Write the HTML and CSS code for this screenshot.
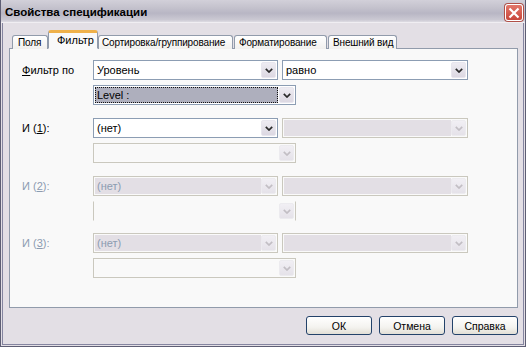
FILE: index.html
```html
<!DOCTYPE html>
<html>
<head>
<meta charset="utf-8">
<link rel="stylesheet" href="styles.css">
</head>
<body>
<div class="win">
  <div class="titlebar">
    <span class="title">Свойства спецификации</span>
    <span class="close"><svg width="12" height="12" viewBox="0 0 12 12"><path d="M1.5 1.5 L10.5 10.5 M10.5 1.5 L1.5 10.5" stroke="#fff" stroke-width="2.2" fill="none"/></svg></span>
  </div>
  <div class="body">
    <div class="tabs">
      <div class="tab t1">Поля</div>
      <div class="tab t2 active">Фильтр</div>
      <div class="tab t3">Сортировка/группирование</div>
      <div class="tab t4">Форматирование</div>
      <div class="tab t5">Внешний вид</div>
    </div>
    <div class="panel">
      <div class="group">
        <div class="label"><u>Ф</u>ильтр по</div>
        <div class="combo c1"><span class="val">Уровень</span><span class="btn"><svg width="8" height="5" viewBox="0 0 8 5"><polyline points="0.8,0.8 4,4 7.2,0.8" fill="none" stroke="#2a2a2a" stroke-width="1.7"/></svg></span></div>
        <div class="combo c2"><span class="val">равно</span><span class="btn"><svg width="8" height="5" viewBox="0 0 8 5"><polyline points="0.8,0.8 4,4 7.2,0.8" fill="none" stroke="#2a2a2a" stroke-width="1.7"/></svg></span></div>
        <div class="combo c3"><span class="val sel">Level :</span><span class="btn"><svg width="8" height="5" viewBox="0 0 8 5"><polyline points="0.8,0.8 4,4 7.2,0.8" fill="none" stroke="#2a2a2a" stroke-width="1.7"/></svg></span></div>
      </div>
      <div class="group">
        <div class="label">И (<u>1</u>):</div>
        <div class="combo c1"><span class="val">(нет)</span><span class="btn"><svg width="8" height="5" viewBox="0 0 8 5"><polyline points="0.8,0.8 4,4 7.2,0.8" fill="none" stroke="#2a2a2a" stroke-width="1.7"/></svg></span></div>
        <div class="combo c2 dis"><span class="val"></span><span class="btn"><svg width="8" height="5" viewBox="0 0 8 5"><polyline points="0.8,0.8 4,4 7.2,0.8" fill="none" stroke="#c2bec4" stroke-width="1.7"/></svg></span></div>
        <div class="combo c3 dis empty"><span class="val"></span><span class="btn"><svg width="8" height="5" viewBox="0 0 8 5"><polyline points="0.8,0.8 4,4 7.2,0.8" fill="none" stroke="#c2bec4" stroke-width="1.7"/></svg></span></div>
      </div>
      <div class="group">
        <div class="label dlabel">И (<u>2</u>):</div>
        <div class="combo c1 dis"><span class="val">(нет)</span><span class="btn"><svg width="8" height="5" viewBox="0 0 8 5"><polyline points="0.8,0.8 4,4 7.2,0.8" fill="none" stroke="#c2bec4" stroke-width="1.7"/></svg></span></div>
        <div class="combo c2 dis"><span class="val"></span><span class="btn"><svg width="8" height="5" viewBox="0 0 8 5"><polyline points="0.8,0.8 4,4 7.2,0.8" fill="none" stroke="#c2bec4" stroke-width="1.7"/></svg></span></div>
        <div class="combo c3 dis empty sides"><span class="val"></span><span class="btn"><svg width="8" height="5" viewBox="0 0 8 5"><polyline points="0.8,0.8 4,4 7.2,0.8" fill="none" stroke="#c2bec4" stroke-width="1.7"/></svg></span></div>
      </div>
      <div class="group g4">
        <div class="label dlabel">И (<u>3</u>):</div>
        <div class="combo c1 dis"><span class="val">(нет)</span><span class="btn"><svg width="8" height="5" viewBox="0 0 8 5"><polyline points="0.8,0.8 4,4 7.2,0.8" fill="none" stroke="#c2bec4" stroke-width="1.7"/></svg></span></div>
        <div class="combo c2 dis"><span class="val"></span><span class="btn"><svg width="8" height="5" viewBox="0 0 8 5"><polyline points="0.8,0.8 4,4 7.2,0.8" fill="none" stroke="#c2bec4" stroke-width="1.7"/></svg></span></div>
        <div class="combo c3 dis empty"><span class="val"></span><span class="btn"><svg width="8" height="5" viewBox="0 0 8 5"><polyline points="0.8,0.8 4,4 7.2,0.8" fill="none" stroke="#c2bec4" stroke-width="1.7"/></svg></span></div>
      </div>
    </div>
    <div class="buttons">
      <div class="button">ОК</div>
      <div class="button">Отмена</div>
      <div class="button">Справка</div>
    </div>
  </div>
</div>
</body>
</html>
```

FILE: styles.css
```css
html, body {
  margin: 0;
  padding: 0;
  background: #e3dfe5;
}
body {
  font-family: "Liberation Sans", Arial, sans-serif;
  font-size: 11px;
  color: #000;
}
.win {
  width: 526px;
  height: 347px;
  box-sizing: border-box;
  display: flex;
  flex-direction: column;
  background: #e3dfe5;
  border: 1px solid #5e5e74;
  border-top: none;
}
.titlebar {
  height: 22px;
  flex: none;
  display: flex;
  align-items: center;
  justify-content: space-between;
  padding: 0 2px 0 4px;
  background: linear-gradient(#d2d0d9 0%, #c4c2cd 35%, #b8b6c4 60%, #cbc9d3 90%, #dedce3 100%);
  border-bottom: 1px solid #f0eef2;
}
.title {
  font-weight: bold;
  font-size: 11.5px;
  color: #000;
  padding-top: 1px;
}
.close {
  width: 18px;
  height: 17px;
  box-sizing: border-box;
  border: 1px solid #fff;
  border-radius: 3px;
  background: linear-gradient(#e2776a, #c8463b);
  display: flex;
  align-items: center;
  justify-content: center;
  box-shadow: 0 0 0 1px #b05048;
  margin-top: 3px;
}
.body {
  flex: 1;
  display: flex;
  flex-direction: column;
  border: 1px solid #8585a0;
  border-top: none;
  margin: 0 1px 1px 1px;
  padding: 8px 5px 8px 6px;
}
.tabs {
  height: 18px;
  display: flex;
  align-items: flex-end;
  padding-left: 3px;
  margin-bottom: -1px;
  position: relative;
  z-index: 1;
}
.tab {
  height: 14px;
  box-sizing: border-box;
  border: 1px solid #919bab;
  border-bottom: none;
  border-radius: 3px 3px 0 0;
  background: linear-gradient(#ffffff, #f1f0ee);
  font-size: 10px;
  letter-spacing: -0.15px;
  line-height: 13px;
  padding: 0 0 0 4px;
  margin-right: 1px;
  white-space: nowrap;
  overflow: hidden;
}
.t1 { width: 36px; padding-left: 5px; }
.t3 { width: 135px; padding-left: 3px; }
.t4 { width: 93px; padding-left: 4px; }
.t5 { width: 69px; padding-left: 4px; }
.tab.active {
  width: 50px;
  height: 19px;
  margin: 0 0 0 -1px;
  background: #f9f9f9;
  border-top: 3px solid #efb14a;
  border-bottom: 1px solid #f9f9f9;
  line-height: 14px;
  padding-left: 8px;
  font-size: 11px;
  letter-spacing: 0;
}
.panel {
  height: 260px;
  box-sizing: border-box;
  flex: none;
  background: #f9f9f9;
  border: 1px solid #919bab;
  padding: 11px 0 0 12px;
  display: flex;
  flex-direction: column;
  gap: 13px;
}
.group {
  display: grid;
  grid-template-columns: 67px 185px 186px;
  grid-template-rows: 20px 20px;
  column-gap: 4px;
  row-gap: 5px;
}
.g4 { margin-top: -1px; }
.label {
  display: flex;
  align-items: center;
  white-space: nowrap;
}
.dlabel { color: #8c9cb1; }
.combo {
  box-sizing: border-box;
  border: 1px solid #8c9db3;
  background: #fff;
  display: flex;
  align-items: stretch;
  padding: 1px;
}
.c3 {
  grid-column: 2 / 4;
  width: 203px;
  grid-row: 2;
}
.val {
  flex: 1;
  display: flex;
  align-items: center;
  padding-left: 2px;
  white-space: nowrap;
}
.val.sel {
  background: #aeafbd;
  outline: 1px dotted #111;
  outline-offset: -1px;
  margin-right: 1px;
}
.btn {
  width: 15px;
  box-sizing: border-box;
  background: linear-gradient(#eeecf2, #dcd8e2);
  border: 1px solid #e8e6ee;
  border-radius: 2px;
  display: flex;
  align-items: center;
  justify-content: center;
}
.combo.dis {
  border-color: #cac8be;
  background: #fafafa;
}
.combo.dis .val {
  background: #e3dfe5;
  color: #8c9cb1;
}
.combo.dis.empty .val {
  background: #f9f9f9;
}
.combo.dis .btn {
  background: linear-gradient(#f1eff4, #e5e2e9);
  border-color: #ecebef;
}
.combo.sides {
  border-top-color: #f9f9f9;
  border-bottom-color: #f9f9f9;
  background: #f9f9f9;
}
.buttons {
  display: flex;
  justify-content: flex-end;
  gap: 7px;
  margin-top: 8px;
}
.button {
  width: 66px;
  height: 19px;
  box-sizing: border-box;
  border: 1px solid #23426a;
  border-radius: 3px;
  background: linear-gradient(#ffffff 0%, #f4f3ef 60%, #e2dfd6 100%);
  display: flex;
  align-items: center;
  justify-content: center;
  font-size: 10.5px;
}
```
